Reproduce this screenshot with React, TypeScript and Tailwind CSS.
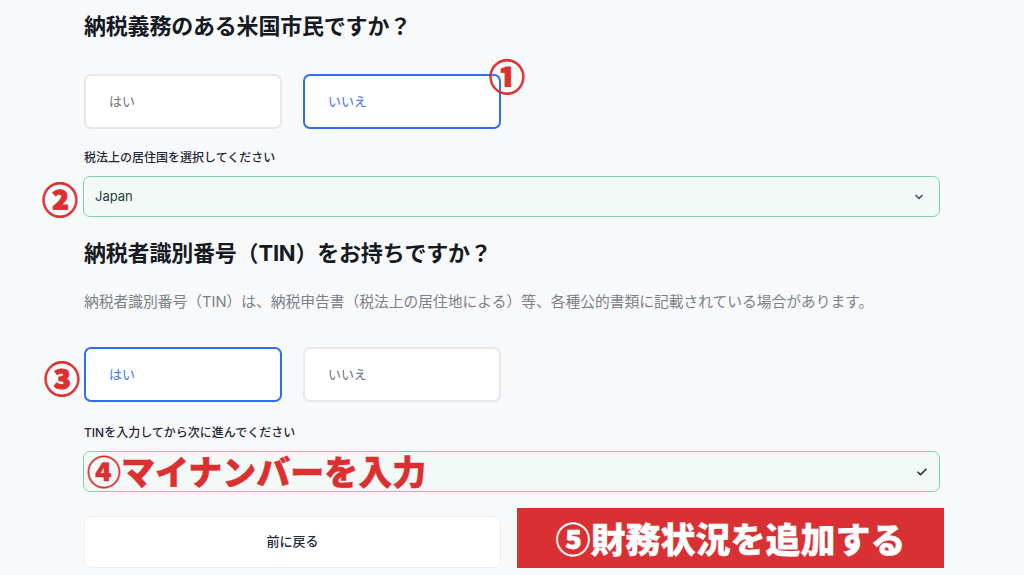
import React from "react";

const font = { fontFamily: 'Inter, "Noto Sans CJK JP", sans-serif' };
const cjk = { fontFamily: '"Noto Sans CJK JP", sans-serif' };

function Choice({ label, selected }: { label: string; selected?: boolean }) {
  return (
    <div
      className={
        "w-[198px] h-[55px] rounded-[7px] bg-white flex items-center pl-[23px] text-[13px] " +
        (selected ? "border-2 border-[#2f6fed] text-[#3b74f0]" : "border-2 border-[#e6e8eb] text-[#6b7280]")
      }
    >
      {label}
    </div>
  );
}

export default function App() {
  return (
    <div className="relative w-[1024px] h-[575px] overflow-hidden bg-[#f8f9fb]" style={font}>
      <div className="w-[857px] ml-[83px] flex flex-col">
        <h1 className="mt-[9px] h-[34px] flex items-center pl-[1px] text-[22px] font-bold text-[#151a23] tracking-[-0.2px]">
          納税義務のある米国市民ですか？
        </h1>
        <div className="mt-[31px] flex gap-[21px] pl-[1px]">
          <Choice label="はい" />
          <Choice label="いいえ" selected />
        </div>
        <div className="mt-[21px] h-[16px] flex items-center pl-[1px] text-[12px] font-medium text-[#1f2937]">
          税法上の居住国を選択してください
        </div>
        <div className="mt-[10px] h-[41px] rounded-[7px] border-[1.5px] border-[#7fd1ad] bg-[#f3f9f7] flex items-center justify-between pl-[11px] pr-[14px] text-[13px] text-[#27403f]">
          <span>Japan</span>
          <svg width="12" height="12" viewBox="0 0 24 24" fill="none" stroke="#4b5563" strokeWidth="3.5" strokeLinecap="round" strokeLinejoin="round">
            <path d="M6 9l6 6 6-6" />
          </svg>
        </div>
        <h2 className="mt-[19px] h-[34px] flex items-center pl-[1px] text-[22px] font-bold text-[#151a23] tracking-[-0.2px]">
          納税者識別番号（TIN）をお持ちですか？
        </h2>
        <p className="mt-[22px] h-[20px] flex items-center pl-[1px] text-[14.75px] text-[#7b8189] whitespace-nowrap">
          納税者識別番号（TIN）は、納税申告書（税法上の居住地による）等、各種公的書類に記載されている場合があります。
        </p>
        <div className="mt-[35px] flex gap-[21px] pl-[1px]">
          <Choice label="はい" selected />
          <Choice label="いいえ" />
        </div>
        <div className="mt-[23px] h-[16px] flex items-center pl-[1px] text-[12px] font-medium text-[#1f2937]">
          TINを入力してから次に進んでください
        </div>
        <div className="relative mt-[10px] h-[41px] rounded-[7px] border-[1.5px] border-[#7fd1ad] bg-[#f3f9f7] flex items-center justify-end pr-[11px]">
          <svg width="12" height="12" viewBox="0 0 24 24" fill="none" stroke="#1f3a3a" strokeWidth="3.5" strokeLinecap="round" strokeLinejoin="round">
            <path d="M4 12.5l5 5L20 6.5" />
          </svg>
          <span className="absolute left-[3px] top-[-2px] text-[34px] leading-[42px] font-black text-[#dc3030] whitespace-nowrap [-webkit-text-stroke:0.4px_#dc3030]" style={cjk}>
            ④マイナンバーを入力
          </span>
        </div>
        <div className="mt-[24px] flex gap-[16px] pl-[1px]">
          <div className="w-[417px] h-[52px] rounded-[7px] border-[1.5px] border-[#eceef1] bg-white flex items-center justify-center text-[13px] font-medium text-[#1f2937]">
            前に戻る
          </div>
        </div>
      </div>

      <div className="absolute left-[517px] top-[508px] w-[427px] h-[60px] bg-[#d93133] flex items-center justify-center text-[35px] font-black text-white whitespace-nowrap [-webkit-text-stroke:0.3px_#ffffff]" style={cjk}>
        ⑤財務状況を追加する
      </div>

      <span className="absolute left-[489px] top-[55px] text-[36px] leading-[40px] font-black text-[#dc3030] [-webkit-text-stroke:0.9px_#dc3030]" style={cjk}>①</span>
      <span className="absolute left-[42px] top-[178px] text-[36px] leading-[40px] font-black text-[#dc3030] [-webkit-text-stroke:0.9px_#dc3030]" style={cjk}>②</span>
      <span className="absolute left-[44px] top-[357px] text-[36px] leading-[40px] font-black text-[#dc3030] [-webkit-text-stroke:0.9px_#dc3030]" style={cjk}>③</span>
    </div>
  );
}
